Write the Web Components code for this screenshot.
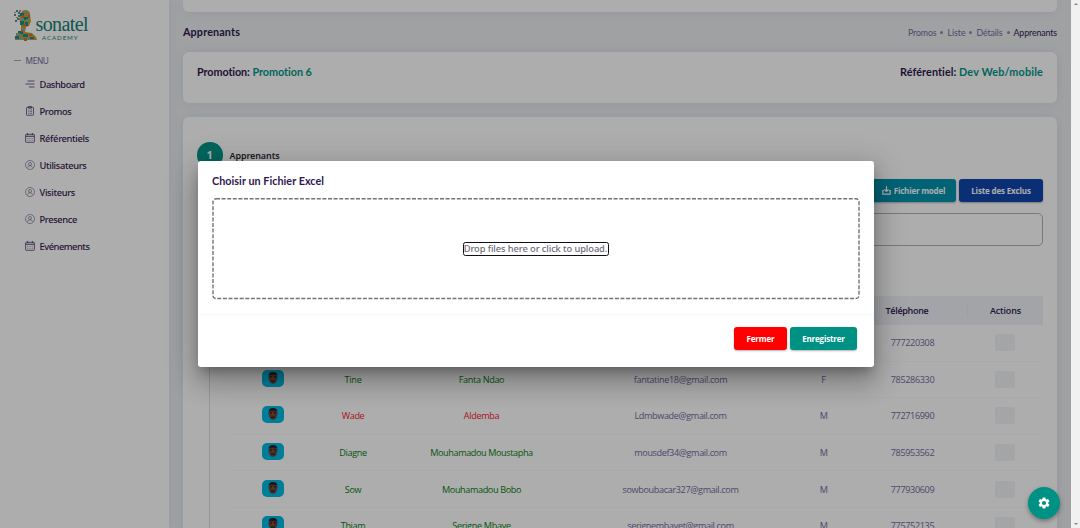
<!DOCTYPE html>
<html lang="fr">
<head>
<meta charset="utf-8">
<title>Sonatel Academy - Apprenants</title>
<style>
html,body{margin:0;height:100%;overflow:hidden}
body{font-family:"Open Sans","Noto Sans",sans-serif;font-size:9.33px;color:#2f1850;background:#eceef1}
</style>
</head>
<body>
<academy-app></academy-app>
<script>
const define = (name, html, setup) => customElements.define(name, class extends HTMLElement {
  connectedCallback() {
    if (this.shadowRoot) return;
    this.attachShadow({ mode: "open" }).innerHTML = html;
    if (setup) setup(this, this.shadowRoot);
  }
});

/* Text that spreads its letters over a given width */
define("fit-text", `<style>:host{display:inline-block;white-space:nowrap}span{display:inline-block}</style><span><slot></slot></span>`, (el, root) => {
  const w = +el.getAttribute("w"), s = root.querySelector("span"), n = el.textContent.length;
  if (!w || !n) return;
  const natural = s.getBoundingClientRect().width;
  s.style.letterSpacing = ((w - natural) / n).toFixed(3) + "px";
});

define("brand-logo", `<style>
:host{display:flex;height:34px;gap:0;padding:9px 0 0 13px;color:#128274}
svg{width:26px;height:33px;flex:none}
.w{display:flex;flex-direction:column;margin-left:-3.500px;padding-top:5px}
.n{font:20px/20px "Liberation Serif",serif;height:20px}
.a{font:6.2px/8px Lato,sans-serif;margin-left:6.500px;height:8px}
</style>
<svg viewBox="0 0 26 33"><path fill="#cf9a35" d="M9 2q6-2.500 8 2l.3 4 .7 4-2 5-3 1-1 5 7 1 4 4 1 3H2l1-5 5-3V15L6 10z"/>
<path fill="#128f91" d="M7 4h4v3H7zM11 8h4v3h-4zM7 12h4v4H7zM12 13h3v4h-3zM5 22h5v3H5zM10 25h5v3h-5zM17 28h4v2h-4zM2 27h4v3H2z"/>
<path fill="#75b5a0" d="M12 2h3v3h-3zM8 9h3v3H8zM13 10h3v3h-3zM9 19h3v3H9zM3 24h4v2H3zM14 28h3v3h-3zM6 28h4v3H6z"/>
<path fill="#dc6c2d" d="M15 6h2v3h-2zM9 6h2v3H9zM10 15h3v2h-3zM8 21h2v2H8zM16 25h3v2h-3zM11 29h3v3h-3z"/>
<path fill="#3a92aa" d="M3 1h2v2H3zM1 5h2v2H1zM5 6h2v2H5zM2 11h2v2H2zM5 3h2v2H5zM4 9h2v2H4z"/><path fill="#e09245" d="M1 3h2v1H1zM3 8h2v1H3zM6 1h2v2H6z"/></svg>
<div class="w"><fit-text class="n" w="52.500">sonatel</fit-text><fit-text class="a" w="36.500">ACADEMY</fit-text></div>`);

const icons = {
  lines: `<path d="M2.5 2h7M.5 5h9M4 8h5.500"/>`,
  board: `<rect x="1.5" y="1.300" width="7" height="8" rx=".7"/><path d="M3.500.6h3v1.500h-3zM3.300 4h1m1 0h1.500M3.300 5.700h1m1 0h1.500M3.300 7.400h1m1 0h1.500"/>`,
  cal: `<rect x=".6" y="1.300" width="8.800" height="8" rx=".6"/><path d="M.6 3.300h8.800M2.600.3v1.700M7.400.3v1.700" stroke-width="1.100"/><path d="M2.300 5.500h1m1.200 0h1m1.200 0h1M2.300 7.300h1m1.200 0h1m1.200 0h1" stroke-width=".6"/>`,
  user: `<g stroke-width=".6" stroke="#6a5c82"><circle cx="5" cy="5" r="4.500"/><circle cx="5" cy="4" r="1.500"/><path d="M2.500 7.600q.5-1.900 2.500-1.900t2.500 1.900"/></g>`
};
define("nav-item", `<style>
:host{display:flex;align-items:center;height:27px;padding-left:25px;gap:4.500px;color:#352052;font-weight:500}
svg{width:10px;height:10px;fill:none;stroke:#513f6e;stroke-width:.8}
</style><svg viewBox="0 0 10 10"></svg><slot></slot>`, (el, root) => {
  root.querySelector("svg").innerHTML = icons[el.getAttribute("icon")];
});

define("side-bar", `<style>
:host{display:block;background:#fff;height:528px;box-shadow:0 0 10px rgba(110,130,165,.12);font-family:"Noto Sans",sans-serif}
.m{display:flex;align-items:center;gap:4.500px;height:16px;margin:9px 0 2.500px 14px;color:#706b9e;font-size:8.300px}
.m:before{content:"";width:7px;height:1px;background:#a9a6bd}
</style><brand-logo></brand-logo><div class="m"><fit-text w="23">MENU</fit-text></div>
<nav-item icon="lines"><fit-text w="45">Dashboard</fit-text></nav-item>
<nav-item icon="board"><fit-text w="32">Promos</fit-text></nav-item>
<nav-item icon="cal"><fit-text w="49.500">Référentiels</fit-text></nav-item>
<nav-item icon="user"><fit-text w="47">Utilisateurs</fit-text></nav-item>
<nav-item icon="user"><fit-text w="35.500">Visiteurs</fit-text></nav-item>
<nav-item icon="user"><fit-text w="37.500">Presence</fit-text></nav-item>
<nav-item icon="cal"><fit-text w="50">Evénements</fit-text></nav-item>`);

define("page-card", `<style>:host{display:block;background:#fff;border-radius:6px;box-sizing:border-box;box-shadow:0 0 12px rgba(90,120,165,.13)}</style><slot></slot>`);

define("title-bar", `<style>
:host{display:flex;justify-content:space-between;align-items:center;height:40px;font-family:Lato,sans-serif}
b{font-size:10.800px;font-weight:700;margin-top:-2px}
nav{display:flex;align-items:center;gap:4px;color:#706b9e;font-size:8.800px}
i{width:3px;height:3px;border-radius:50%;background:#8f8da0}
.c{color:#2f1850}
</style><b><fit-text w="57">Apprenants</fit-text></b>
<nav><fit-text w="28.500">Promos</fit-text><i></i><fit-text w="18">Liste</fit-text><i></i><fit-text w="26">Détails</fit-text><i></i><fit-text class="c" w="43.500">Apprenants</fit-text></nav>`);

define("promo-info", `<style>
:host{display:flex;justify-content:space-between;padding:13px 14px 0;height:38px;font:700 10.800px/14px Lato,sans-serif}
span{color:#009688}
</style><div><fit-text w="53">Promotion:</fit-text> <span><fit-text w="59.500">Promotion 6</fit-text></span></div><div><fit-text w="56.500">Référentiel:</fit-text> <span><fit-text w="84">Dev Web/mobile</fit-text></span></div>`);

define("action-button", `<style>
:host{display:flex;align-items:center;justify-content:center;gap:3px;box-sizing:border-box;height:23px;border-radius:3px;color:#fff;font-weight:700;font-size:8px;background:var(--bg);box-shadow:0 1px 2px rgba(0,0,0,.3)}
</style><slot></slot>`);

define("step-head", `<style>
:host{display:flex;align-items:center;gap:7px;height:26px;padding:25px 14px 0}
i{width:25.500px;height:25.500px;border-radius:50%;background:#009688;color:#fff;font:700 11px/25px "Noto Sans",sans-serif;text-align:center}
b{color:#2e2e33;font-weight:600;font-family:"Noto Sans",sans-serif;font-size:9px}
</style><i>1</i><b><fit-text w="50">Apprenants</fit-text></b>`);

define("tool-row", `<style>
:host{display:flex;justify-content:flex-end;gap:3px;padding:11px 14px 0}
svg{width:9px;height:9px;fill:none;stroke:#fff;stroke-width:1.200}
.f{width:94px;padding-left:9px}.l{width:84px}
</style><action-button class="f" style="--bg:#0093ae"><svg viewBox="0 0 9 9"><path d="M4.500.3v5M2.500 3.500l2 2 2-2M2 4.500H.8v3.700h7.400V4.500H7"/></svg><fit-text w="51.500">Fichier model</fit-text></action-button>
<action-button class="l" style="--bg:#1046ad"><fit-text w="59.500">Liste des Exclus</fit-text></action-button>`);

define("search-box", `<style>:host{display:block;margin:11px 14px 0 26px;height:33px;box-sizing:border-box;border:1px solid #b3b3b8;border-radius:5px}</style>`);

define("learner-avatar", `<style>:host{display:block;width:22px;height:17px;margin-bottom:2px}svg{display:block}</style>
<svg width="22" height="17" viewBox="0 0 22 17"><rect width="22" height="17" rx="5" fill="#00bae2"/><path d="M7 6q0-3.300 4-3.300T15 6l.8 1-.7 2q-.6 4.700-4.100 4.700T6.900 9l-.7-2z" fill="#6d4538"/><path d="M6.700 6q-.2-3.900 4.300-3.900T15.300 6l-1.200-1.200H8z" fill="#252026"/><path d="M8 6.800h2M12 6.800h2M9.200 11.200h3.600" stroke="#251b1d" stroke-width="1"/><path d="M11 7v2.300" stroke="#8d5d4b"/></svg>`);

const grid = "display:grid;grid-template-columns:84px 76px 181px 217px 69px 109px 76px;align-items:center;justify-items:center;box-sizing:border-box";
define("learner-row", `<style>
:host{${grid};height:36.600px;border-bottom:1px solid #f8f9fa;color:#706b9e;font-size:9.100px}
.act{width:20px;height:17px;border-radius:2px;background:#f0f3f6;grid-column:7}
.nm{color:var(--name)}
</style>`, (el, root) => {
  const v = el.getAttribute("data").split("|"), w = el.getAttribute("widths").split("|");
  el.style.setProperty("--name", el.hasAttribute("out") ? "#f5222d" : "#087d16");
  root.innerHTML += `<learner-avatar></learner-avatar>` + v.map((t, i) => `<fit-text w="${w[i]}" class="${i < 2 ? "nm" : ""}">${t}</fit-text>`).join("") + `<div class="act"></div>`;
});
define("learner-table", `<style>
:host{display:block;margin:50px 14px 0 26px;border-left:1px solid #dededf;padding-left:21px;height:240px}
.h{${grid};height:29px;background:#f0f2f8;font-weight:600;font-size:9px;color:#2f1850}
.t{grid-column:6;margin-right:11px}.a{grid-column:7;width:100%;text-align:center;border-left:1px solid #e8eaf1;box-sizing:border-box}
</style><div class="h"><fit-text class="t" w="43">Téléphone</fit-text><div class="a"><fit-text w="31">Actions</fit-text></div></div>
<learner-row data="||||777220308" widths="0|0|0|0|43.500"></learner-row>
<learner-row data="Tine|Fanta Ndao|fantatine18@gmail.com|F|785286330" widths="17|45.500|93.500|4.500|43.500"></learner-row>
<learner-row out data="Wade|Aldemba|Ldmbwade@gmail.com|M|772716990" widths="22.500|35.500|92|7.500|43.500"></learner-row>
<learner-row data="Diagne|Mouhamadou Moustapha|mousdef34@gmail.com|M|785953562" widths="27.500|102.500|92.500|7.500|43.500"></learner-row>
<learner-row data="Sow|Mouhamadou Bobo|sowboubacar327@gmail.com|M|777930609" widths="16.500|79|116|7.500|43.500"></learner-row>
<learner-row data="Thiam|Serigne Mbaye|serignembayet@gmail.com|M|775752135" widths="24.500|58.500|106.500|7.500|43.500"></learner-row>`);

define("upload-dialog", `<style>
:host{display:block;position:absolute;left:198px;top:161px;width:676px;height:206px;background:#fff;border-radius:3px;box-shadow:0 7px 10px -3px rgba(0,0,0,.25),0 16px 25px 2px rgba(0,0,0,.17),0 6px 31px 5px rgba(0,0,0,.15)}
h5{margin:0;padding:13px 14px 0;height:24px;font:700 10.800px/14px Lato,sans-serif}
.z{position:relative;margin:0 14px;width:648px;height:102px;display:flex;align-items:center;justify-content:center}
.z>svg{position:absolute;inset:0}
.b{box-sizing:border-box;width:146px;height:14px;border:1.500px solid #101014;border-radius:2.500px;display:flex;align-items:center;justify-content:center;color:#6d6b78;font:500 9.300px/12px "Noto Sans",sans-serif;margin-right:1px}
.f{display:flex;justify-content:flex-end;gap:3px;margin-top:14px;padding:14px 17px 0 0;height:38px;background:linear-gradient(#f8fafc,#fff 6px)}
.f action-button:first-child{width:53px}.f action-button:last-child{width:67px}
</style><h5><fit-text w="112">Choisir un Fichier Excel</fit-text></h5>
<div class="z"><svg width="648" height="102"><rect x="1" y=".8" width="646" height="99.700" rx="3" fill="none" stroke="#74747a" stroke-width="1.400" stroke-dasharray="4 1.600"/></svg><div class="b"><fit-text w="143.500">Drop files here or click to upload.</fit-text></div></div>
<div class="f" style="margin-top:13px"><action-button style="--bg:#ff0000"><fit-text w="28">Fermer</fit-text></action-button><action-button style="--bg:#009185"><fit-text w="42.500">Enregistrer</fit-text></action-button></div>`);

define("settings-fab", `<style>:host{position:absolute;left:1028px;top:487px;width:32px;height:32px;border-radius:50%;background:#009185;display:flex;align-items:center;justify-content:center;box-shadow:0 2px 4px rgba(0,0,0,.35)}svg{width:14px;height:14px;fill:#fff}</style>
<svg viewBox="0 0 24 24"><path d="M19.140 12.940c.04-.3.06-.61.06-.94s-.02-.64-.07-.94l2.030-1.580a.49.49 0 0 0 .12-.61l-1.920-3.320a.49.49 0 0 0-.59-.22l-2.390.96a7 7 0 0 0-1.620-.94l-.36-2.540a.48.48 0 0 0-.48-.41h-3.840a.48.48 0 0 0-.47.41l-.36 2.540c-.59.24-1.130.57-1.620.94l-2.390-.96a.48.48 0 0 0-.59.22L2.740 8.870a.48.48 0 0 0 .12.61l2.030 1.580a6.600 6.600 0 0 0 0 1.880l-2.030 1.580a.49.49 0 0 0-.12.61l1.920 3.320c.12.22.37.29.59.22l2.390-.96c.5.38 1.030.7 1.620.94l.36 2.540c.05.24.24.41.48.41h3.840c.24 0 .44-.17.47-.41l.36-2.540c.59-.24 1.130-.56 1.620-.94l2.390.96c.22.08.47 0 .59-.22l1.920-3.320a.47.47 0 0 0-.12-.61zM12 15.600a3.600 3.600 0 1 1 0-7.200 3.600 3.600 0 0 1 0 7.200z"/></svg>`);

define("scroll-rail", `<style>:host{background:#f1f1f1;height:528px;display:flex;flex-direction:column;justify-content:space-between;align-items:center;padding:3px 0;box-sizing:border-box}i{border:2px solid transparent;border-top:0;border-bottom:2px solid #858585}i+i{border-bottom:0;border-top:2px solid #858585}</style><i></i><i></i>`);

define("academy-app", `<style>
:host{display:grid;grid-template-columns:169px 902px 9px;width:1080px;height:528px;overflow:hidden;position:relative}
main{padding:0 14px;height:528px;overflow:hidden}
.top{height:12px;border-radius:0 0 6px 6px}
.p{height:51px}.t{height:430px;margin-top:14px}
.s{position:absolute;left:0;top:0;width:1071px;height:528px;background:rgba(0,0,0,.32)}
</style><side-bar></side-bar>
<main><page-card class="top"></page-card><title-bar></title-bar><page-card class="p"><promo-info></promo-info></page-card>
<page-card class="t"><step-head></step-head><tool-row></tool-row><search-box></search-box><learner-table></learner-table></page-card></main>
<scroll-rail></scroll-rail><div class="s"></div><upload-dialog></upload-dialog><settings-fab></settings-fab>`);
</script>
</body>
</html>
